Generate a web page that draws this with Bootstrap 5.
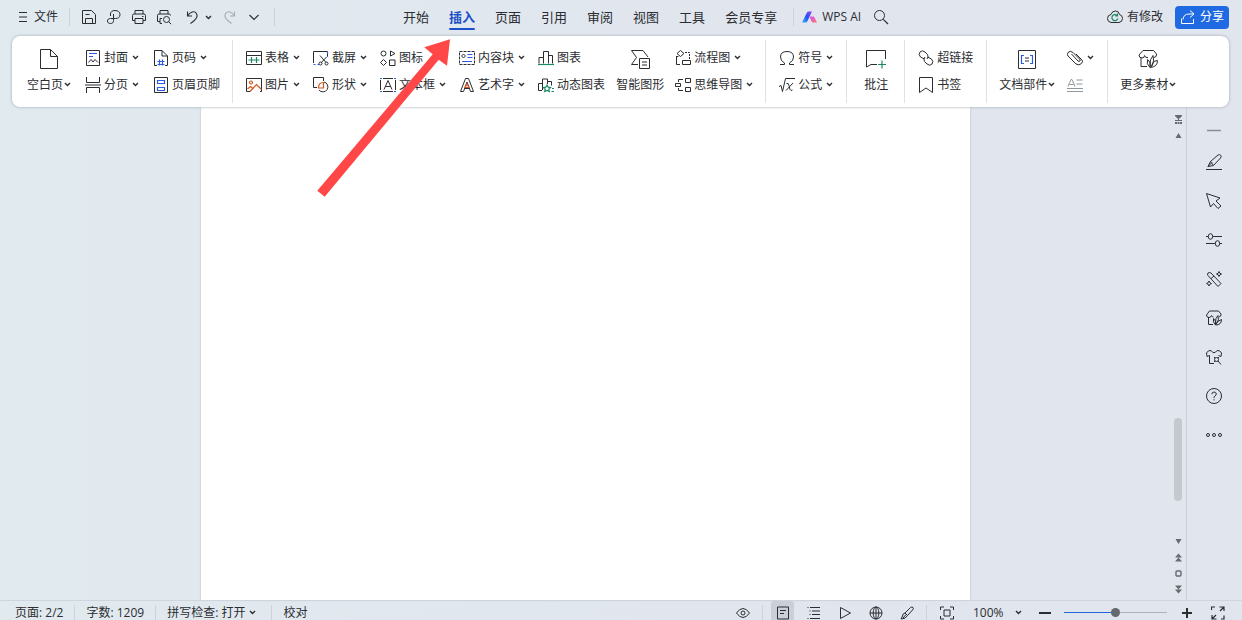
<!DOCTYPE html>
<html lang="zh-CN">
<head>
<meta charset="utf-8">
<meta name="viewport" content="width=device-width, initial-scale=1">
<title>WPS 文字</title>
<link href="https://cdn.jsdelivr.net/npm/bootstrap@5.3.0/dist/css/bootstrap.min.css" rel="stylesheet">
<style>
:root{--ink:#2b2d31;--line:#cdd3da;--blue:#1c50c8;--green:#1b8a62;--orange:#d2571e}
body{font-family:"Open Sans","Noto Sans CJK SC",sans-serif;font-size:12px;line-height:20px;color:var(--ink);background:linear-gradient(90deg,#e1eaef,#e1e6ee 55%,#e1e5ed);overflow:hidden}
button{font:inherit;color:inherit;background:none;border:0;padding:0;white-space:nowrap}
svg{fill:none;stroke:currentColor;stroke-width:1;flex:none;display:block}
svg .b{stroke:#2c5be5;stroke-width:1.2}svg .g{stroke:var(--green);stroke-width:1.2}svg .o{stroke:var(--orange);stroke-width:1.2}
svg .s{fill:currentColor;stroke:none}
.ic{width:16px;height:16px}
.caret{width:7px;height:7px;stroke-width:1.4}
.sep{width:1px;height:18px;background:var(--line);flex:none}
.topbar{height:36px;padding:0 13px 2px 18px}
.file-sep{margin-left:11px}
.quick{gap:9px;margin-left:11px;margin-right:12px}
.tabs{gap:20px;font-size:13px;margin-left:128px;margin-right:16px}
.tabs a{color:var(--ink);text-decoration:none;position:relative;line-height:34px}
.tabs a.active{color:var(--blue);font-weight:700}
.tabs a.active::after{content:"";position:absolute;left:0;right:0;bottom:4px;height:2px;border-radius:1px;background:var(--blue)}
.share{background:#1f6ae2;color:#fff;border-radius:4px;height:23px;padding:0 5px}
.ribbon{background:#fff;border-radius:8px;margin:0 13px 0 12px;padding-left:1px;box-shadow:0 0 3px #9aa4ae;z-index:2}
.group{padding:8px 13px 9px 14px;gap:13px;position:relative}
.group.snug{padding-right:12px}
.group.pages{gap:14px}
.group.lead-big{padding-left:13px;gap:12px}
.group.solo{padding-left:18px;padding-right:16px}
.group+.group::before{content:"";position:absolute;left:0;top:4px;bottom:4px;width:1px;background:#dfe1e4}
.tool{display:flex;align-items:center;gap:3px;height:27px}
.tool .caret,.bigtool .caret{margin-left:1px}
.bigtool{display:flex;flex-direction:column;align-items:center}
.bigtool.tight{margin:0 -2px}
.bigtool>svg{width:20px;height:20px;margin:5px 0 2px}
.bigtool>span{height:27px;display:flex;align-items:center}
.sheet{width:66%;max-width:769px;background:#fff;box-shadow:0 0 2px #b5bcc4}
.scroller{width:16px;padding:8px 0 6px;color:#686a6e}
.scroller svg{width:9px;height:9px}
.scroller .step{margin-top:7px}
.thumb{width:8px;background:#c5c8cd;border-radius:4px}
.side{width:56px;border-left:1px solid #cbd1dc;padding:4px 1px 0 0}
.side button{height:39px;display:grid;place-items:center}
.side button:first-child{height:32px;margin-bottom:-1px;padding-top:6px}
.status{height:20px;border-top:1px solid #cfd5dc;padding:0 13px 0 15px;overflow:hidden}
.status .sep{height:15px;margin-top:4px}
.left-status{gap:11px;line-height:23px}
.tools{gap:8px}
.sq{width:23px;height:23px;display:grid;place-items:center}
.sq.active{background:#cbd0d8;border-radius:3px}
.sq svg{width:14px;height:14px}
.zoom{appearance:none;border:0;width:59px;height:23px;padding:0 0 0 7px;color:inherit;font:inherit;background:url("data:image/svg+xml,%3Csvg xmlns='http://www.w3.org/2000/svg' width='7' height='7'%3E%3Cpath d='M1 2l2.500 2.500L6 2' fill='none' stroke='%232b2d31' stroke-width='1.400'/%3E%3C/svg%3E") no-repeat 49px 8px}
.slide{appearance:none;width:103px;height:23px;background:linear-gradient(90deg,#2166d8 50%,#aeb3ba 50%) no-repeat 0 11px/100% 1px}
.slide::-webkit-slider-thumb{appearance:none;width:9px;height:9px;border-radius:50%;background:#65686d;border:0}
.pointer{position:absolute;left:317px;top:39px;width:134px;height:158px;z-index:5;pointer-events:none}
</style>
</head>
<body class="vh-100 d-flex flex-column">
<svg width="0" height="0" class="position-absolute">
<symbol id="caret" viewBox="0 0 7 7"><path d="M1 2l2.500 2.500L6 2"/></symbol>
<symbol id="leafshop" viewBox="0 0 20 20"><path d="M3 8.500V17.500H9M5 1.500H15.500L18.500 5Q19 8 16 8.500M5 1.500L1 6Q1 9 4 9Q6.500 9 6.500 6.500Q7 9 10 8.500"/><path d="M12 18.500Q8 15 9.500 10.500Q13 13 12 18.500ZM12 17Q11.500 10 15 6.500Q17 12 13.500 17M12 18.500Q14.500 17.500 15 14.500T19.500 11.500Q19.500 18 12 18.500Z"/></symbol>
</svg>

<header class="topbar d-flex align-items-center flex-shrink-0">
  <button class="d-flex align-items-center gap-1"><svg width="12" height="16" viewBox="0 0 12 16"><path d="M1 3.500h8M1 8h8M1 12.500h8"/></svg>文件</button>
  <i class="sep file-sep"></i>
  <div class="quick d-flex align-items-center">
    <button aria-label="保存"><svg class="ic" viewBox="0 0 16 16"><path d="M1.500 1.500h9L14.500 5.500v9h-13zM4.500 14.500V9.500h7v5M4.500 5.500h4"/></svg></button>
    <button aria-label="输出PDF"><svg class="ic" viewBox="0 0 16 16"><path d="M4.500 7V5C4.500 2.500 6.500 1.500 9 1.500C12 1.500 14 3 14 5.500C14 8.500 12 9.500 9.500 9.500H4.500C2.500 9.500 1.500 10.500 1.500 12S2.500 14.500 4.500 14.500S7.500 13.500 7.500 11.500V5"/></svg></button>
    <button aria-label="打印"><svg class="ic" viewBox="0 0 16 16"><path d="M4 5V1.500h8V5M4 11.500H1.500V6.500Q1.500 5 3 5h10q1.500 0 1.500 1.500v5H12M4 9.500h8v5H4zM11 7.500h1.500"/></svg></button>
    <button aria-label="打印预览"><svg class="ic" viewBox="0 0 16 16"><path d="M4 5V1.500h8V5M4 12.500H1.500V6.500Q1.500 5 3 5h10q1.500 0 1.500 1.500M6 14.500H4v-5h2"/><circle cx="10.500" cy="10.500" r="3"/><path d="M12.700 12.700l2.500 2.500"/></svg></button>
    <button class="d-flex align-items-center gap-1 ms-1" aria-label="撤销"><svg class="ic" viewBox="0 0 16 16"><path stroke-width="1.100" d="M2.500 2.500v4.500H7M2.500 7C5 2.500 9.500 1.500 11.500 4.500C13.500 8 11 11 5.500 14.500"/></svg><svg class="caret"><use href="#caret"/></svg></button>
    <button class="text-secondary opacity-50" aria-label="恢复"><svg class="ic" viewBox="0 0 16 16"><path stroke-width="1.100" d="M13.500 2.500v4.500H9M13.500 7C11 2.500 6.500 1.500 4.500 4.500C2.500 8 5 11 10.500 14.500"/></svg></button>
    <button aria-label="更多"><svg class="ic" viewBox="0 0 16 16"><path d="M3.500 6L8 10.500 12.500 6" stroke-width="1.100"/></svg></button>
  </div>
  <i class="sep"></i>
  <nav class="tabs d-flex text-nowrap">
    <a href="#">开始</a><a href="#" class="active">插入</a><a href="#">页面</a><a href="#">引用</a><a href="#">审阅</a><a href="#">视图</a><a href="#">工具</a><a href="#">会员专享</a>
  </nav>
  <i class="sep"></i>
  <button class="d-flex align-items-center gap-1 ms-2">
    <svg class="ic" viewBox="0 0 16 16"><defs><linearGradient id="ga" x1="0" x2="1" y1="1" y2="0"><stop stop-color="#35b5ff"/><stop offset=".5" stop-color="#2450f5"/><stop offset="1" stop-color="#9a45f5"/></linearGradient><linearGradient id="gb" x2="1" y2="1"><stop stop-color="#d44df2"/><stop offset="1" stop-color="#ff796f"/></linearGradient></defs><path fill="url(#ga)" stroke="none" d="M0 13.500L5 3.500Q5.500 2.500 7 2.500H10L5.500 12Q5 13.500 3.500 13.500Z"/><path fill="url(#gb)" stroke="none" d="M7.500 7.500H11Q12 7.500 12.500 8.500L15 13.500H11.500Q10 13.500 9.500 12.500Z"/></svg>WPS AI</button>
  <button class="ms-2 ps-1" aria-label="搜索"><svg class="ic" viewBox="0 0 16 16"><circle cx="6.500" cy="6.500" r="5"/><path d="M10.300 10.300L15 15" stroke-width="1.200"/></svg></button>
  <div class="ms-auto d-flex align-items-center gap-2">
    <button class="d-flex align-items-center gap-1 me-1"><svg class="ic" viewBox="0 0 16 16"><path d="M4 13.500Q.5 13 .5 9.500T4 5.500Q5 2 8.500 2T12.500 5.500Q15.500 6 15.500 9.500T12 13.500Z"/><path class="g" d="M10 6.500A3 3 0 1 0 10.800 9.500M10.500 4.500v2.300H8.300"/></svg>有修改</button>
    <button class="share d-flex align-items-center gap-1"><svg class="ic" viewBox="0 0 16 16" stroke-width="1.200"><path d="M10 1.500L14 5 10 8.500M14 5H9Q3.500 5 3 10.500M1.500 9.500v5h12V10"/></svg>分享</button>
  </div>
</header>

<section class="ribbon d-flex flex-shrink-0 position-relative">
  <div class="group snug pages d-flex">
    <button class="bigtool"><svg viewBox="0 0 20 20"><path d="M1.500.5H11.500L18.500 7.500V19.500H1.500ZM11.500.5V7.500H18.500"/></svg><span>空白页<svg class="caret"><use href="#caret"/></svg></span></button>
    <div>
      <button class="tool"><svg class="ic" viewBox="0 0 16 16"><path d="M1.500.5h13v15h-13zM3.500 12.500l2.500-3 2 2.500 2-2.500 3 3"/><path class="b" d="M4 3.500h8M4 6.500h4"/></svg>封面<svg class="caret"><use href="#caret"/></svg></button>
      <button class="tool"><svg class="ic" viewBox="0 0 16 16"><path d="M1.500 0V5.500h13V0M0 8h16M1.500 16V10.500h13V16"/></svg>分页<svg class="caret"><use href="#caret"/></svg></button>
    </div>
    <div>
      <button class="tool"><svg class="ic" viewBox="0 0 16 16"><path d="M4 15.500H1.500V.5H9L14.500 6V15.500H12M9 .5V6H14.500"/><path class="b" d="M6.500 9.500v6M9.500 9.500v6M4.500 11.500h7M4.500 14.500h7"/></svg>页码<svg class="caret"><use href="#caret"/></svg></button>
      <button class="tool"><svg class="ic" viewBox="0 0 16 16"><path d="M1.500.5h13v15h-13z"/><path class="b" d="M4.500 3.500h7v3h-7zM4.500 10.500h7v3h-7z"/></svg>页眉页脚</button>
    </div>
  </div>
  <div class="group snug d-flex">
    <div>
      <button class="tool"><svg class="ic" viewBox="0 0 16 16"><path d="M.5 1.500h15v13H.5zM.5 5.500h15"/><path class="g" d="M2.500 10h11M5.500 7v6M10.500 7v6"/></svg>表格<svg class="caret"><use href="#caret"/></svg></button>
      <button class="tool"><svg class="ic" viewBox="0 0 16 16"><path d="M4 14.500H.5v-13h15v13H14"/><circle class="o" cx="5" cy="5.500" r="1.500"/><path class="o" d="M4 14.500l6.500-7 5 5M1.500 12l3-2.500 3 2.500"/></svg>图片<svg class="caret"><use href="#caret"/></svg></button>
    </div>
    <div>
      <button class="tool"><svg class="ic" viewBox="0 0 16 16"><path d="M.5 13V1.500h14V6"/><path class="b" stroke-dasharray="2 2" d="M.5 14.500H6M14.500 2v5"/><path d="M7 5.500l6 7M13.500 7l-5.500 6"/><circle cx="7.500" cy="13.500" r="1.500"/><circle cx="13.500" cy="13.500" r="1.500"/></svg>截屏<svg class="caret"><use href="#caret"/></svg></button>
      <button class="tool"><svg class="ic" viewBox="0 0 16 16"><path d="M4 10.500H.5V.5H10.500V4M11 5A5 5 0 1 1 6 13"/><path class="o" d="M5.500 11Q5.500 5.500 10.500 5.500V11Z"/></svg>形状<svg class="caret"><use href="#caret"/></svg></button>
    </div>
    <div>
      <button class="tool"><svg class="ic" viewBox="0 0 16 16"><circle cx="3.500" cy="3.500" r="2.500"/><path d="M10.500 1L15 3.500 10.500 6ZM3.500 9.500l3 3-3 3-3-3zM9.500 10h5.500v5.500H9.500z"/></svg>图标</button>
      <button class="tool"><svg class="ic" viewBox="0 0 16 16"><path d="M.5 3v10M15.500 3v10M3 1.500h10M3 14.500h10M4 12.500L8 3.500 12 12.500M5.500 9.500h5"/><path class="b" d="M0 1.500h2M14 1.500h2M0 14.500h2M14 14.500h2"/></svg>文本框<svg class="caret"><use href="#caret"/></svg></button>
    </div>
    <div>
      <button class="tool"><svg class="ic" viewBox="0 0 16 16"><path stroke-dasharray="3 1" d="M.5 1.500h15v13H.5z"/><path d="M4.500 4l2 2-2 2-2-2z"/><path class="b" d="M8.500 4.500h5M8.500 7.500h5M3 11.500h10"/></svg>内容块<svg class="caret"><use href="#caret"/></svg></button>
      <button class="tool"><svg class="ic" viewBox="0 0 16 16"><path d="M1.500 14.500L6.500 1.500h3L14.500 14.500h-3L8 5 4.500 14.500zM5.500 11.500h5"/><path class="o" d="M6 10.500h4L8 6.500z"/></svg>艺术字<svg class="caret"><use href="#caret"/></svg></button>
    </div>
    <div>
      <button class="tool"><svg class="ic" viewBox="0 0 16 16"><path d="M1 13.500V7.500H5M5.500 13.500v-12h5v12M10.500 5.500h4v8"/><path class="g" d="M0 14.500h16"/></svg>图表</button>
      <button class="tool"><svg class="ic" viewBox="0 0 16 16"><path d="M4 13.500H.5v-7H4.500M4.500 13v-11h5v5M9.500 4.500h4v4"/><path class="g" d="M9 8l1.200 2.200 2.300.4-1.700 1.600.5 2.300L9 13.400l-2.300 1.100.5-2.300-1.700-1.600 2.300-.4zM14 11.500h2M13.500 14.500H16"/></svg>动态图表</button>
    </div>
    <button class="bigtool tight"><svg viewBox="0 0 20 20"><path d="M8 15.500H1.500L6.500 8.500 1.500 1.500H13L18 8M9.500 9.500h10v10h-10zM12 13h5M12 16h5"/></svg><span>智能图形</span></button>
    <div>
      <button class="tool"><svg class="ic" viewBox="0 0 16 16"><path d="M5.500.500L9 3.500 5.500 6.500 2 3.500zM7.500 10.500h8v4h-8zM1.500 6v8.500H5M1.500 6.500h2"/><path stroke-dasharray="2 1" d="M10 2.500h4.500V9"/></svg>流程图<svg class="caret"><use href="#caret"/></svg></button>
      <button class="tool"><svg class="ic" viewBox="0 0 16 16"><path d="M.5 6.500h5v3h-5zM10.500 1.500h5v4h-5zM10.500 10.500h5v4h-5zM3.500 5V2.500H8M3.500 11v2.500H8"/></svg>思维导图<svg class="caret"><use href="#caret"/></svg></button>
    </div>
  </div>
  <div class="group d-flex">
    <div>
      <button class="tool"><svg class="ic" viewBox="0 0 16 16"><path d="M1 14.500H5.500V13Q1.500 11 1.500 7Q1.500 1.500 8 1.500T14.500 7Q14.500 11 10.500 13V14.500H15"/></svg>符号<svg class="caret"><use href="#caret"/></svg></button>
      <button class="tool"><svg class="ic" viewBox="0 0 16 16"><path d="M0 9.500L2 8.500 3.500 14.500 6.500 1.500H16M7.500 6.500Q9.500 5.500 10 8.500L11 12.500Q11.500 14 13.500 13M14 6L7 13.500"/></svg>公式<svg class="caret"><use href="#caret"/></svg></button>
    </div>
  </div>
  <div class="group solo d-flex">
    <button class="bigtool"><svg viewBox="0 0 20 20"><path d="M19.500 10V1.500H.5V18L5 15.500H11"/><path class="g" d="M12 15.500h8M16 11.500v8"/></svg><span>批注</span></button>
  </div>
  <div class="group d-flex">
    <div>
      <button class="tool"><svg class="ic" viewBox="0 0 16 16"><path d="M6.500 9L2.500 7Q0 4.500 2 2T7 2L9.500 4.500Q11 7 9 9M9.500 7L13.500 9Q16 11.500 14 14T9 14L6.500 11.500Q5 9 7 7"/></svg>超链接</button>
      <button class="tool"><svg class="ic" viewBox="0 0 16 16"><path d="M1.500.5h13v15L8 11 1.500 15.500z"/></svg>书签</button>
    </div>
  </div>
  <div class="group lead-big d-flex">
    <button class="bigtool"><svg viewBox="0 0 20 20"><path d="M1.500 1.500h17v18h-17zM8 9h4M8 12h4"/><path class="b" d="M7 6.500H4.500v8H7M13 6.500h2.500v8H13"/></svg><span>文档部件<svg class="caret"><use href="#caret"/></svg></span></button>
    <div>
      <button class="tool" aria-label="附件"><svg class="ic" viewBox="0 0 16 16"><path d="M4.500 4L11 11Q12.500 12 13 11T12.500 9L6 2.500Q3 0 1 2.500T2 7L9 14Q12 16 14.500 13.500T14 9L9 4"/></svg><svg class="caret"><use href="#caret"/></svg></button>
      <button class="tool text-secondary opacity-75" aria-label="首字下沉"><svg class="ic" viewBox="0 0 16 16"><path d="M1 9.500L4 2.500h1L8 9.500M2.500 7.500h4M9.500 3h6M9.500 7h6M0 11.500h16M0 14.500h16"/></svg></button>
    </div>
  </div>
  <div class="group lead-big d-flex">
    <button class="bigtool"><svg><use href="#leafshop"/></svg><span>更多素材<svg class="caret"><use href="#caret"/></svg></span></button>
  </div>
</section>

<main class="d-flex flex-grow-1">
  <div class="flex-grow-1 d-flex justify-content-center"><article class="sheet"></article></div>
  <div class="scroller d-flex flex-column align-items-center">
    <svg viewBox="0 0 9 9"><path class="s" d="M1 0h7v1L5.500 3.500h-2L1 1zM4 3h1v2h3v1H1V5h3zM1 7h2v2H1zM3.500 7h2v2h-2zM6 7h2v2H6z"/></svg>
    <svg class="step" viewBox="0 0 9 9"><path class="s" d="M1.500 7h6l-3-5z"/></svg>
    <i style="flex-grow:278"></i><i class="thumb" style="flex-grow:83"></i><i style="flex-grow:36"></i>
    <svg viewBox="0 0 9 9"><path class="s" d="M1.500 2h6l-3 5z"/></svg>
    <svg class="step" viewBox="0 0 9 9"><path class="s" d="M1 4.500h7l-3.500-4zM1 8.500h7l-3.500-4z"/></svg>
    <svg class="step" viewBox="0 0 9 9"><rect x="2" y="2" width="5" height="5" rx="1" stroke-width="1.400"/></svg>
    <svg class="step" viewBox="0 0 9 9"><path class="s" d="M1 .5h7l-3.500 4zM1 4.500h7l-3.500 4z"/></svg>
  </div>
  <aside class="side d-flex flex-column">
    <button aria-label="收起"><svg class="ic" viewBox="0 0 16 16"><path d="M1 8.500h14" stroke="#8b8e93" stroke-width="1.500"/></svg></button>
    <button aria-label="编辑"><svg class="ic" viewBox="0 0 16 16"><path d="M0 15.500h16M2 12.500L4.500 7.500 12 1Q13.500 0 14.700 1.300T14.500 4L7.500 11.500 2 12.500M4.500 7.500l3 4M2 12.500l4-4"/></svg></button>
    <button aria-label="选择"><svg class="ic" viewBox="0 0 16 16"><path d="M.5.5L4.500 14 7.500 10.500 12 15.500 15 13 10 8 14 5z"/></svg></button>
    <button aria-label="设置"><svg class="ic" viewBox="0 0 16 16"><ellipse cx="4.500" cy="4.500" rx="2.200" ry="2.800"/><ellipse cx="11.500" cy="11.500" rx="2.200" ry="2.800"/><path d="M0 4.500h2.300M6.700 4.500H16M0 11.500h9.300M13.700 11.500H16"/></svg></button>
    <button aria-label="智能工具"><svg class="ic" viewBox="0 0 16 16"><path d="M2 4.500Q1 3 2 2T5 2L15 12.500 12 15.500ZM5 7.500L8 5M13 .5l.8 1.700 1.700.8-1.700.8L13 5.500l-.8-1.700-1.700-.8 1.700-.8zM3 10l.8 1.700 1.700.8-1.700.8L3 15l-.8-1.700L.5 12.500l1.700-.8z"/></svg></button>
    <button aria-label="素材"><svg class="ic" viewBox="0 0 16 16"><path d="M2.500 7V14.500H7M3.500 1H12.500L15 4Q15.500 6.500 13 7M3.500 1L.5 5Q.5 7.500 3 7.500Q5 7.500 5.500 5.500Q6 7 7.500 7M9.500 15Q6.500 12 7.500 8.500Q10.500 10.500 9.500 15ZM9.500 13.500Q9 8 12 5.500Q13.500 10 10.500 13.500M9.500 15Q11.500 10.500 15.500 9.500Q15.500 15 9.500 15Z"/></svg></button>
    <button aria-label="换肤"><svg class="ic" viewBox="0 0 16 16"><path d="M3.500 6.500V14.500H8M3.500 6.500L1 7.500.5 4Q2 1 5 1.500Q8 6 11 1.500Q14 1 15.500 4L15 7.500 12.500 6.500"/><circle cx="10.500" cy="10.500" r="2"/><path d="M8 8l1 1M13 8l-1 1M8 13l1-1M12 12l3 3.500"/></svg></button>
    <button aria-label="帮助"><svg class="ic" viewBox="0 0 16 16"><circle cx="8" cy="8" r="7.500"/><path d="M5.800 6.200Q6 4 8.100 4T10.300 6Q10.300 7 9 7.900T8 10M8 11.200v1.200"/></svg></button>
    <button aria-label="更多"><svg class="ic" viewBox="0 0 16 16"><circle cx="2" cy="8" r="1.500"/><circle cx="8" cy="8" r="1.500"/><circle cx="14" cy="8" r="1.500"/></svg></button>
  </aside>
</main>

<footer class="status d-flex justify-content-between align-items-start flex-shrink-0">
  <div class="left-status d-flex text-nowrap">
    <span>页面: 2/2</span><i class="sep"></i><span>字数: 1209</span><i class="sep"></i>
    <button class="d-flex align-items-center gap-1">拼写检查: 打开 <svg class="caret"><use href="#caret"/></svg></button><i class="sep ms-1"></i><button>校对</button>
  </div>
  <div class="tools d-flex">
    <button class="sq" aria-label="护眼"><svg viewBox="0 0 14 14"><path d="M.5 7Q3.500 2.500 7 2.500T13.500 7Q10.500 11.500 7 11.500T.5 7Z"/><circle cx="7" cy="7" r="2"/></svg></button>
    <i class="sep"></i>
    <button class="sq active" aria-label="页面视图"><svg viewBox="0 0 14 14"><path d="M1.500 1h11v12h-11zM4 4.500h6M4 7.500h4"/></svg></button>
    <button class="sq" aria-label="大纲"><svg viewBox="0 0 14 14"><path d="M3 1.500h10M5 5h8M5 8.500h8M3 12.500h10M.5 1.500h1M2.500 5h1M2.500 8.500h1M.5 12.500h1"/></svg></button>
    <button class="sq" aria-label="播放"><svg viewBox="0 0 14 14"><path d="M2.500 1.500L12.500 7 2.500 12.500z"/></svg></button>
    <button class="sq" aria-label="网页"><svg viewBox="0 0 14 14"><circle cx="7" cy="7" r="6"/><ellipse cx="7" cy="7" rx="2.800" ry="6"/><path d="M1 7h12M7 1v12"/></svg></button>
    <button class="sq" aria-label="画笔"><svg viewBox="0 0 14 14"><path d="M5 7L10.500 1.500Q12 .5 13 1.500T12.500 4L7.500 9.500ZM5 7Q2.500 7.500 2.500 10L1 13Q6 13 7.500 9.500M3 12l3-3.500"/></svg></button>
    <i class="sep"></i>
    <button class="sq" aria-label="适应"><svg viewBox="0 0 14 14"><path d="M.5 4V1h3.500M10 1h3.500v3M13.500 10v3H10M4 13H.5v-3M4 4h6v6H4z"/></svg></button>
    <select class="zoom" aria-label="缩放"><option>100%</option><option>75%</option></select>
    <button class="sq" aria-label="缩小"><svg viewBox="0 0 14 14"><path d="M1 7h12" stroke-width="2"/></svg></button>
    <input class="slide" type="range" aria-label="缩放比例" value="50">
    <button class="sq" aria-label="放大"><svg viewBox="0 0 14 14"><path d="M2 7h10M7 2v10" stroke-width="2"/></svg></button>
    <button class="sq" aria-label="全屏"><svg viewBox="0 0 14 14"><path d="M.5 4V1H4M8.500 1H13v4M13 1L9 5M13 9.500V13H10M5.500 13H1V9M1 13l4-4" stroke-width="1.200"/></svg></button>
  </div>
</footer>
<svg class="pointer" viewBox="317 39 134 158" aria-hidden="true"><path d="M450 39.300L424.300 47.300 432.700 54.300 317.300 190.700 324.700 196.700 438.700 59.700 447 65.700z" fill="#ff4747" stroke="none"/></svg>
<script src="https://cdn.jsdelivr.net/npm/bootstrap@5.3.0/dist/js/bootstrap.bundle.min.js"></script>
</body>
</html>
